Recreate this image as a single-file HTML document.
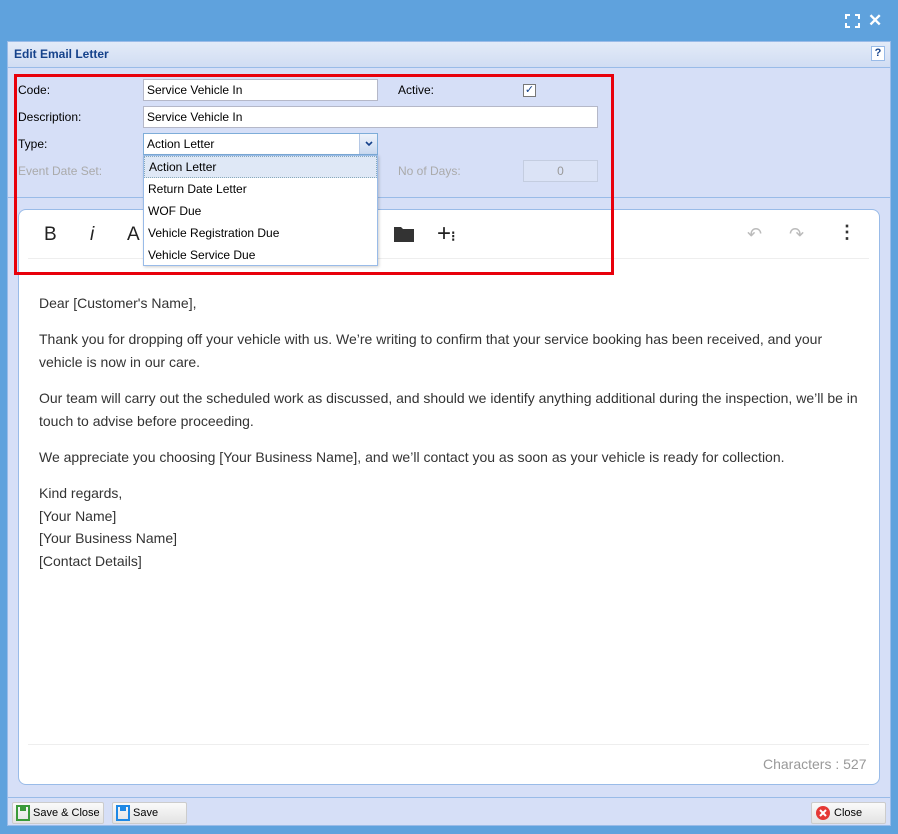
<!DOCTYPE html>
<html><head><meta charset="utf-8"><style>
*{box-sizing:border-box;margin:0;padding:0}
body{width:898px;height:834px;background:#5fa2dd;position:relative;overflow:hidden;font-family:"Liberation Sans",sans-serif;}
.a{position:absolute}
.lbl{font-size:12px;color:#000;}
.inp{background:#fff;border:1px solid #b5b8c8;font-size:12px;padding:3px 3px;height:22px}
.p{font-size:14px;color:#333;line-height:23px;}
.btn{background:linear-gradient(#fafafa,#e3e3e3);border:1px solid #ccc;border-radius:2px;font-size:11px;height:22px;display:flex;align-items:center;padding:0 3px;gap:3px;white-space:nowrap}
.dd div{height:22px;line-height:22px;padding-left:4px;font-size:12px}
</style></head><body>
<svg class="a" style="left:845px;top:14px" width="15" height="14"><path d="M1 5V1h4M10 1h4v4M14 9v4h-4M5 13H1V9" fill="none" stroke="#fff" stroke-width="2"/></svg>
<div class="a" style="left:868px;top:11px;color:#fff;font-size:17px;font-weight:bold">✕</div>
<div class="a" style="left:7px;top:41px;width:884px;height:785px;background:#d6dff7;border:1px solid #99bbe8"></div>
<div class="a" style="left:8px;top:42px;width:882px;height:26px;background:linear-gradient(#e3ebf8,#d1ddf3);border-bottom:1px solid #99bbe8"></div>
<div class="a" style="left:14px;top:47px;font-size:12px;font-weight:bold;color:#15428b">Edit Email Letter</div>
<div class="a" style="left:871px;top:46px;width:14px;height:15px;border:1px solid #99bbe8;background:#fff;font-size:11px;font-weight:bold;color:#15428b;text-align:center;line-height:13px">?</div>
<div class="a" style="left:8px;top:197px;width:882px;height:1px;background:#99bbe8"></div>

<div class="a lbl" style="left:18px;top:83px">Code:</div>
<div class="a inp" style="left:143px;top:79px;width:235px">Service Vehicle In</div>
<div class="a lbl" style="left:398px;top:83px">Active:</div>
<div class="a" style="left:523px;top:84px;width:13px;height:13px;border:1px solid #777;background:#fff;font-size:11px;line-height:11px;text-align:center;color:#15428b">✓</div>
<div class="a lbl" style="left:18px;top:110px">Description:</div>
<div class="a inp" style="left:143px;top:106px;width:455px">Service Vehicle In</div>
<div class="a lbl" style="left:18px;top:137px">Type:</div>
<div class="a inp" style="left:143px;top:133px;width:235px;border-color:#7eadd9">Action Letter</div>
<div class="a" style="left:359px;top:134px;width:18px;height:20px;background:linear-gradient(#eef3fb,#c9d9f0);border-left:1px solid #b5c8e5"><svg width="18" height="20"><path d="M6 8l3 3 3-3" fill="none" stroke="#15428b" stroke-width="1.6"/></svg></div>
<div class="a lbl" style="left:18px;top:164px;color:#aaa">Event Date Set:</div>
<div class="a lbl" style="left:398px;top:164px;color:#aaa">No of Days:</div>
<div class="a" style="left:523px;top:160px;width:75px;height:22px;border:1px solid #c4cde0;background:#dbe3f6;font-size:12px;color:#999;text-align:center;line-height:20px">0</div>

<div class="a" style="left:18px;top:209px;width:862px;height:576px;background:#fff;border:1px solid #99bbe8;border-radius:8px"></div>
<div class="a" style="left:44px;top:224px;font-size:19px;color:#222">B</div>
<div class="a" style="left:90px;top:224px;font-size:19px;color:#222;font-style:italic">i</div>
<div class="a" style="left:127px;top:224px;font-size:19px;color:#222">A</div>
<svg class="a" style="left:393px;top:225px" width="22" height="18"><path d="M1 2h7l2 2h11v13H1z" fill="#333"/></svg>
<div class="a" style="left:437px;top:220px;font-size:24px;color:#222">+<span style="font-size:14px;font-weight:bold">⁝</span></div>
<div class="a" style="left:747px;top:224px;font-size:18px;color:#bbb">↶</div>
<div class="a" style="left:789px;top:224px;font-size:18px;color:#bbb">↷</div>
<div class="a" style="left:838px;top:222px;font-size:18px;color:#333;font-weight:bold">⋮</div>
<div class="a" style="left:28px;top:258px;width:841px;height:1px;background:#eee"></div>

<div class="a p" style="left:39px;top:292px;width:830px">
<div style="margin-bottom:13px">Dear [Customer's Name],</div>
<div style="margin-bottom:13px">Thank you for dropping off your vehicle with us. We’re writing to confirm that your service booking has been received, and your vehicle is now in our care.</div>
<div style="margin-bottom:13px">Our team will carry out the scheduled work as discussed, and should we identify anything additional during the inspection, we’ll be in touch to advise before proceeding.</div>
<div style="margin-bottom:13px">We appreciate you choosing [Your Business Name], and we’ll contact you as soon as your vehicle is ready for collection.</div>
<div style="line-height:22.5px">Kind regards,<br>[Your Name]<br>[Your Business Name]<br>[Contact Details]</div>
</div>
<div class="a" style="left:28px;top:744px;width:841px;height:1px;background:#eee"></div>
<div class="a" style="left:763px;top:756px;font-size:14px;color:#999">Characters : 527</div>

<div class="a dd" style="left:143px;top:155px;width:235px;height:111px;background:#fff;border:1px solid #99bbe8;box-shadow:1px 1px 3px rgba(0,0,0,.2)">
<div style="background:#dfe8f6;border:1px dotted #8ab;line-height:20px">Action Letter</div>
<div>Return Date Letter</div><div>WOF Due</div><div>Vehicle Registration Due</div><div>Vehicle Service Due</div>
</div>
<div class="a" style="left:14px;top:74px;width:600px;height:201px;border:3px solid #e8000b"></div>

<div class="a" style="left:8px;top:797px;width:882px;height:1px;background:#99bbe8"></div>
<div class="a btn" style="left:12px;top:802px;width:92px"><svg width="14" height="16"><rect x="1" y="1" width="12" height="14" fill="none" stroke="#3a9a3a" stroke-width="2"/><rect x="4" y="1" width="6" height="5" fill="#3a9a3a"/></svg>Save &amp; Close</div>
<div class="a btn" style="left:112px;top:802px;width:75px"><svg width="14" height="16"><rect x="1" y="1" width="12" height="14" fill="none" stroke="#1e88e5" stroke-width="2"/><rect x="4" y="1" width="6" height="5" fill="#1e88e5"/></svg>Save</div>
<div class="a btn" style="left:811px;top:802px;width:75px"><svg width="16" height="16"><circle cx="8" cy="8" r="7" fill="#e53935"/><path d="M5 5l6 6M11 5l-6 6" stroke="#fff" stroke-width="2"/></svg>Close</div>
</body></html>
